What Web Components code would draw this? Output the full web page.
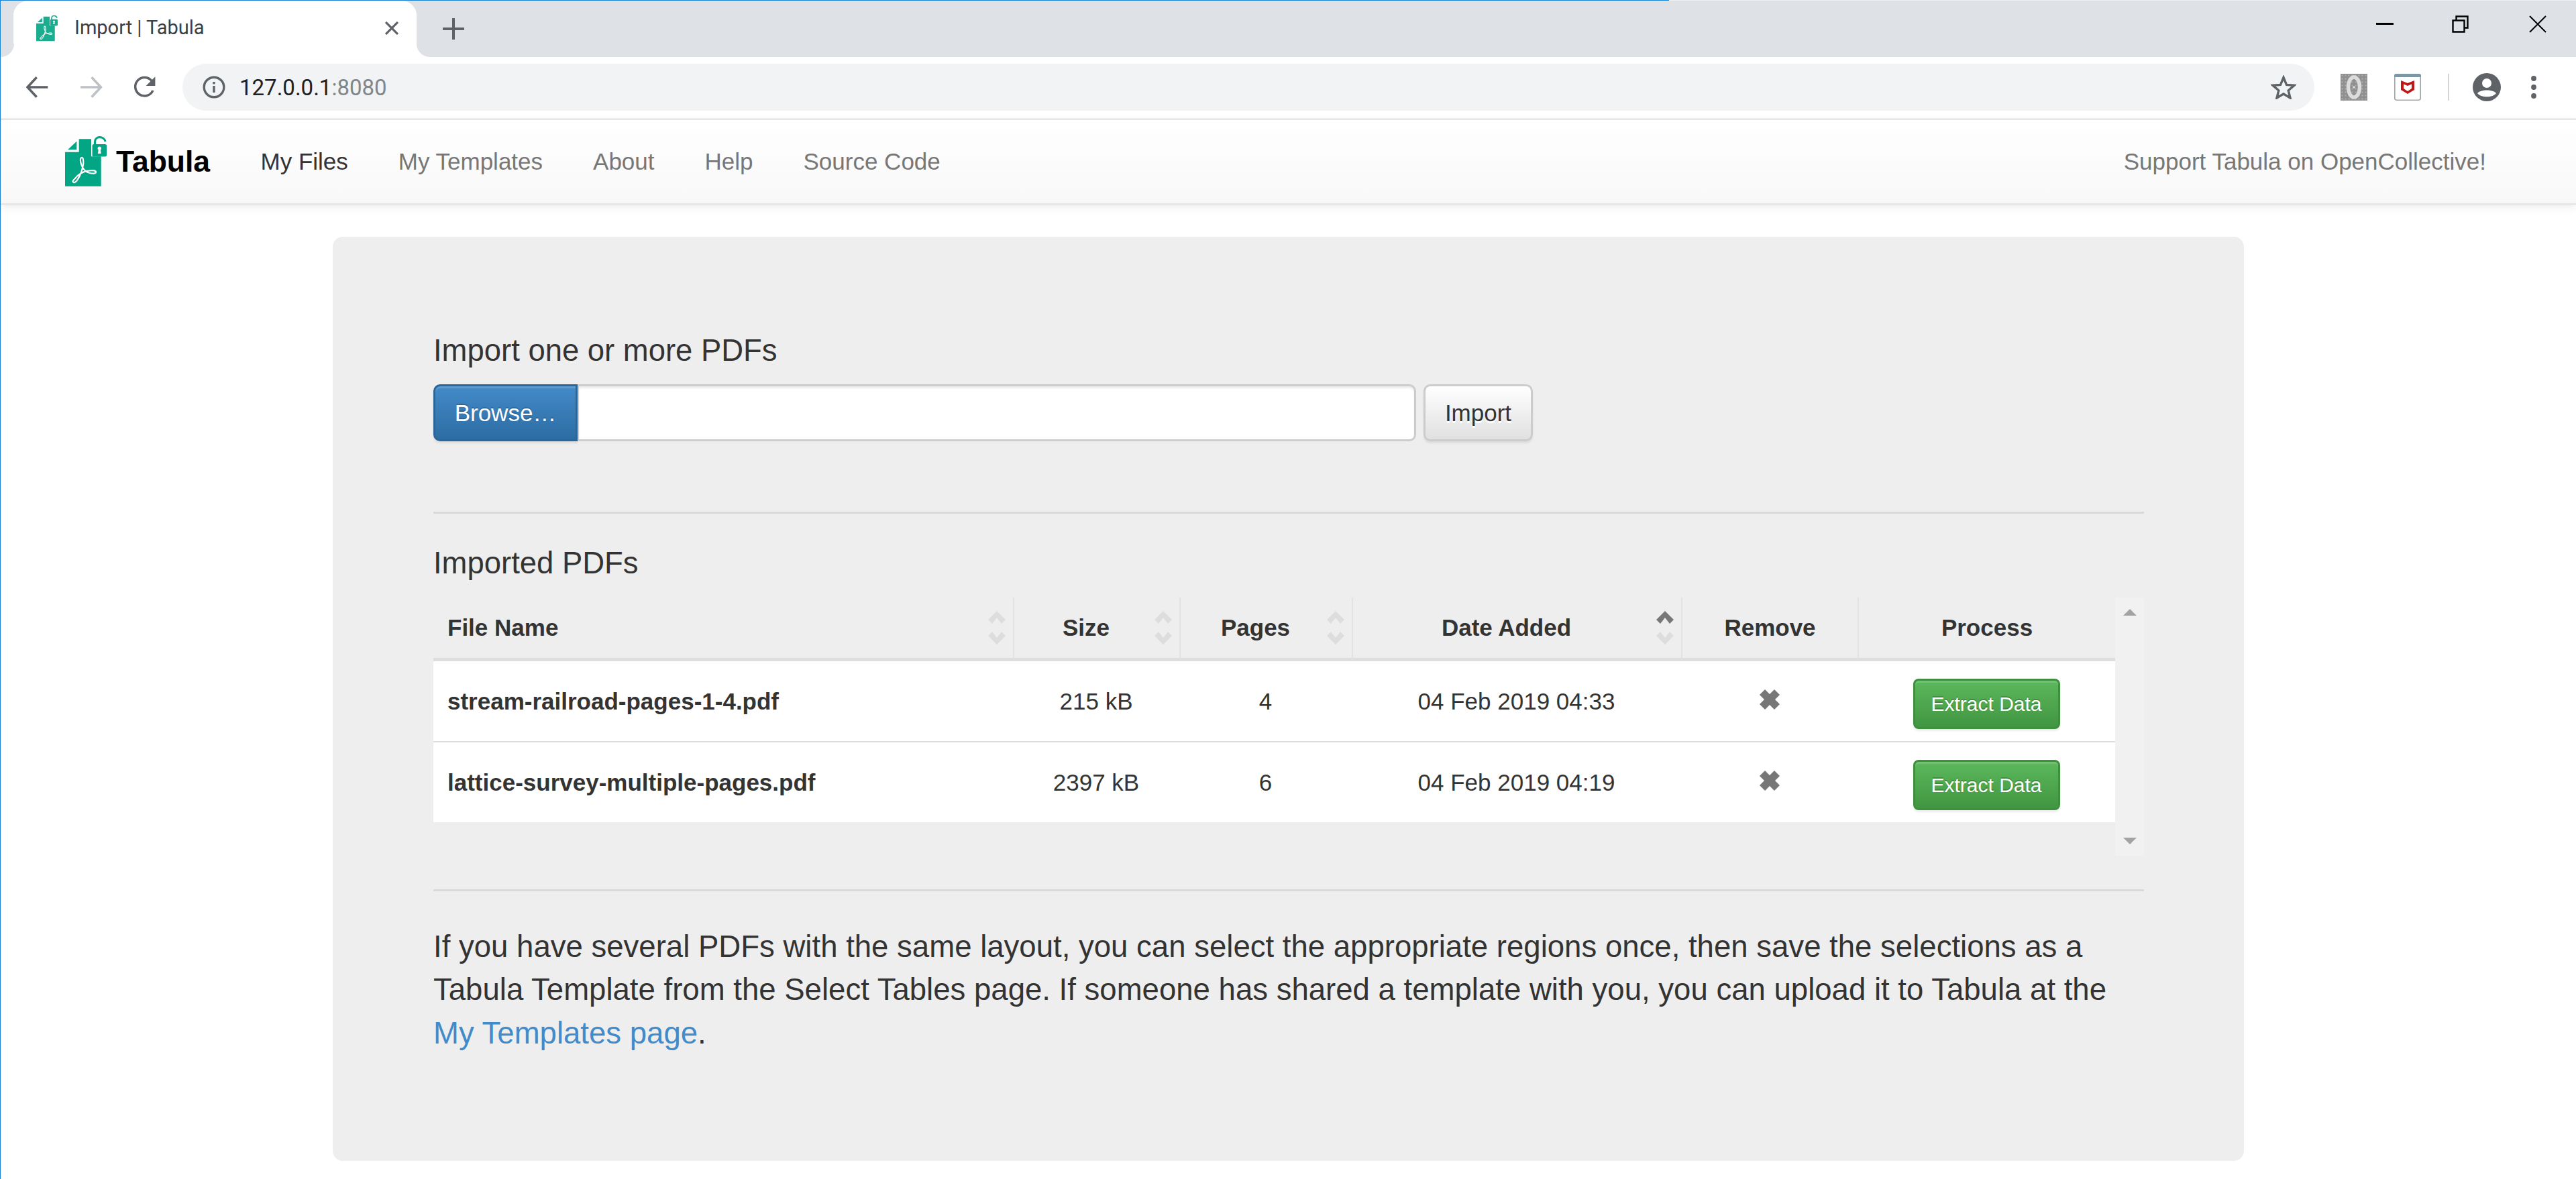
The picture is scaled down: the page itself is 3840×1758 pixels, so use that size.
<!DOCTYPE html>
<html>
<head>
<meta charset="utf-8">
<title>Import | Tabula</title>
<style>
  html, body { margin: 0; height: 100%; background: #fff; overflow: hidden; }
  body { font-family: "Liberation Sans", Arial, sans-serif; color: #333; font-size: 35px; }
</style>
</head>
<body>
<app-window>
  <browser-chrome></browser-chrome>
  <tabula-nav></tabula-nav>
  <import-panel></import-panel>
</app-window>

<script>
// Logo shapes, reused for the favicon and the navbar brand
const logoShapes = `
    <path d="M0 23.7H20.7V4.3H39V30.3H53.7V74.7H0Z" fill="#02a584"/>
    <path d="M17.3 7.7V20.3H4Z" fill="#02a584"/>
    <rect x="40.5" y="12" width="21.5" height="18.5" rx="2.5" fill="#02a584"/>
    <path d="M44.5 13V8.5C44.5 -0.5 58 -0.5 60.2 8" fill="none" stroke="#02a584" stroke-width="3.2"/>
    <path d="M51.3 15.5a2.7 2.7 0 0 1 1.5 5l1 5.5h-5l1-5.5a2.7 2.7 0 0 1 1.5-5Z" fill="#fff"/>
    <path d="M25 32C22 32 22.5 38 24.5 43C27 50 32 54 37 55C41 56 46 56 46 53.5C46 51 41 51 36 51.5C28 52 19 57 15 63C12 66 10 68 13 69C16 70 21 62 24 54C26 48 28 40 27 36C27 33 26 32 25 32Z" fill="none" stroke="#fff" stroke-width="2.2" stroke-linejoin="round"/>`;

function tabulaLogo(w, h) {
  return `<svg width="${w}" height="${h}" viewBox="0 0 62 75">${logoShapes}</svg>`;
}

class AppWindow extends HTMLElement {
  constructor() {
    super();
    this.attachShadow({ mode: 'open' }).innerHTML = `
      <style>
        :host { display: flex; flex-direction: column; height: 1758px; box-sizing: border-box; border-left: 1px solid #1883d7; position: relative; }
        .edge { position: absolute; left: -1px; top: 0; width: 2488px; height: 1px; background: #1883d7; z-index: 2; }
      </style>
      <div class="edge"></div>
      <slot></slot>`;
  }
}

class BrowserChrome extends HTMLElement {
  constructor() {
    super();
    this.attachShadow({ mode: 'open' }).innerHTML = `
      <style>
        :host { display: block; font-family: Roboto, "Open Sans", sans-serif; }
        .strip { height: 84px; padding-top: 1px; background: #dee1e6; box-shadow: inset 0 1px #eff1f3; display: flex; }
        .tab { margin-left: 19px; width: 601px; height: 84px; background: #fff; border-radius: 22px 22px 0 0; display: flex; align-items: center; box-sizing: border-box; padding-left: 34px; position: relative; }
        .tab::before, .tab::after { content: ""; position: absolute; bottom: 0; width: 20px; height: 20px; }
        .tab::before { left: -19px; background: radial-gradient(circle at 0 0, #dee1e6 19.5px, #fff 20.5px); }
        .tab::after { right: -20px; background: radial-gradient(circle at 100% 0, #dee1e6 19.5px, #fff 20.5px); }
        .tab svg.fav { margin-bottom: 2px; }
        .title { margin-left: 25px; font-size: 29px; color: #3c4043; margin-bottom: 4px; white-space: nowrap; flex: 1; }
        .plus { margin-left: 39px; margin-top: 26px; display: block; }
        .close { margin-right: 27px; margin-bottom: 2px; }
        .winbtns { margin-left: auto; display: flex; align-items: center; height: 70px; }
        .toolbar { height: 93px; box-sizing: border-box; background: #fff; border-bottom: 1px solid #b4b5b6; display: flex; align-items: center; }
        .navic { display: flex; align-items: center; padding-left: 38px; gap: 47px; width: 232px; box-sizing: border-box; margin-bottom: 2px; }
        .omni { margin-left: 39px; width: 3178px; height: 70px; margin-bottom: 2px; border-radius: 35px; background: #f1f3f4; display: flex; align-items: center; padding: 0 27px 0 30px; box-sizing: border-box; }
        .url { margin-left: 21px; font-size: 33px; color: #202124; flex: 1; }
        .url span { color: #80868b; }
        .ext { display: flex; align-items: center; margin-left: 39px; margin-bottom: 2px; }
      </style>
      <div class="strip">
        <div class="tab">
          <svg class="fav" width="32" height="40" viewBox="0 0 62 75" style="opacity:.9">${logoShapes}</svg>
          <span class="title">Import | Tabula</span>
          <svg class="close" width="20" height="20" viewBox="0 0 20 20"><path d="M1 1L19 19M19 1L1 19" stroke="#5f6368" stroke-width="3.2"/></svg>
        </div>
        <svg class="plus" width="32" height="32" viewBox="0 0 32 32"><path d="M16 1V31M1 16H31" stroke="#5f6368" stroke-width="4" stroke-linecap="round"/></svg>
        <div class="winbtns">
          <svg width="26" height="4" viewBox="0 0 26 4" style="margin-right:87px"><rect width="26" height="3" fill="#000"/></svg>
          <svg width="25" height="26" viewBox="0 0 25 26" style="margin-right:90px"><path d="M1.5 7.5H18.5V24.5H1.5ZM6.5 7V1.5H23.5V18.5H19" fill="none" stroke="#000" stroke-width="2.4"/></svg>
          <svg width="26" height="26" viewBox="0 0 26 26" style="margin-right:44px"><path d="M1 1L25 25M25 1L1 25" stroke="#000" stroke-width="2"/></svg>
        </div>
      </div>
      <div class="toolbar">
        <div class="navic">
          <svg width="34" height="32" viewBox="0 0 34 32"><path d="M33 16H3M16 1L2 16L16 31" fill="none" stroke="#5f6368" stroke-width="3.6"/></svg>
          <svg width="34" height="32" viewBox="0 0 34 32"><path d="M1 16H31M18 1L32 16L18 31" fill="none" stroke="#bdc1c6" stroke-width="3.6"/></svg>
          <svg width="34" height="34" viewBox="0 0 34 34"><path d="M28.5 22A14 14 0 1 1 27 8" fill="none" stroke="#5f6368" stroke-width="3.6"/><path d="M32 1V15H18Z" fill="#5f6368"/></svg>
        </div>
        <div class="omni">
          <svg width="34" height="34" viewBox="0 0 34 34"><circle cx="17" cy="17" r="14.8" fill="none" stroke="#5f6368" stroke-width="3.4"/><rect x="15.2" y="15" width="3.4" height="10" fill="#5f6368"/><rect x="15.2" y="9" width="3.4" height="3.4" fill="#5f6368"/></svg>
          <span class="url">127.0.0.1<span>:8080</span></span>
          <svg width="38" height="36" viewBox="0 0 38 36"><path d="M19 3.5L23.5 14.5L35 15.3L26.2 22.8L29 34L19 28L9 34L11.8 22.8L3 15.3L14.5 14.5Z" fill="none" stroke="#5f6368" stroke-width="3.4"/></svg>
        </div>
        <div class="ext">
          <svg width="40" height="40" viewBox="0 0 40 40">
            <defs><pattern id="dots" width="5" height="5" patternUnits="userSpaceOnUse"><rect width="5" height="5" fill="#8f8f8f"/><circle cx="2.5" cy="2.5" r="1.2" fill="#aaa"/></pattern></defs>
            <rect width="40" height="40" fill="url(#dots)"/><ellipse cx="20" cy="20" rx="8.5" ry="15" fill="none" stroke="#dcdcdc" stroke-width="5.5"/><circle cx="20" cy="20" r="1.8" fill="#ddd"/>
          </svg>
          <svg width="40" height="40" viewBox="0 0 40 40" style="margin-left:40px"><rect x=".8" y=".8" width="38.4" height="38.4" rx="3" fill="#fff" stroke="#9ea5a9" stroke-width="1.6"/><path d="M0 5V3A3 3 0 0 1 3 0H37A3 3 0 0 1 40 3V5Z" fill="#7c98a5"/><path d="M10 10L20 14L30 10V24L20 30L10 24Z" fill="#c01818"/><path d="M14 15.5L20 18L26 15.5V22L20 26L14 22Z" fill="#fff"/></svg>
          <div style="width:2px;height:40px;background:#d3d5d7;margin-left:40px"></div>
          <svg width="42" height="42" viewBox="0 0 42 42" style="margin-left:35px"><circle cx="21" cy="21" r="21" fill="#5f6368"/><circle cx="21" cy="15" r="7" fill="#fff"/><path d="M7 30C12 24 30 24 35 30C30 37 12 37 7 30Z" fill="#fff"/></svg>
          <svg width="10" height="36" viewBox="0 0 10 36" style="margin-left:44px"><circle cx="5" cy="5" r="3.9" fill="#5f6368"/><circle cx="5" cy="18" r="3.9" fill="#5f6368"/><circle cx="5" cy="31" r="3.9" fill="#5f6368"/></svg>
        </div>
      </div>`;
  }
}

class TabulaNav extends HTMLElement {
  constructor() {
    super();
    const links = ['My Files', 'My Templates', 'About', 'Help', 'Source Code'];
    this.attachShadow({ mode: 'open' }).innerHTML = `
      <style>
        :host { display: flex; align-items: center; height: 128px; box-sizing: border-box; padding: 0 134px 0 96px; background: linear-gradient(to bottom, #fff 0, #f8f8f8 100%); border-bottom: 3px solid #e7e7e7; box-shadow: 0 3px 12px rgba(0,0,0,.075); font-size: 35px; color: #777; position: relative; }
        .brand { display: flex; align-items: center; width: 291.5px; }
        .brand b { font-size: 44.5px; color: #000; margin-left: 14px; }
        a { margin-right: 75px; white-space: nowrap; }
        a.on { color: #333; }
        .right { margin-left: auto; margin-right: 0; }
      </style>
      <div class="brand">${tabulaLogo(62, 75)}<b>Tabula</b></div>
      ${links.map((l, i) => `<a class="${i === 0 ? 'on' : ''}">${l}</a>`).join('')}
      <a class="right">Support Tabula on OpenCollective!</a>`;
  }
}

class SortMark extends HTMLElement {
  constructor() {
    super();
    this.attachShadow({ mode: 'open' }).innerHTML = `
      <style>:host { display: block; position: absolute; right: 10px; top: 19px; line-height: 0; }</style>
      <svg width="28" height="52" viewBox="0 0 28 52">
        <path d="M14 1L27 14L21 20L14 11L7 20L1 14Z" fill="${this.getAttribute('dir') === 'up' ? '#777' : '#ddd'}"/>
        <path d="M14 51L27 38L21 32L14 41L7 32L1 38Z" fill="#ddd"/>
      </svg>`;
  }
}

class RemoveIcon extends HTMLElement {
  constructor() {
    super();
    this.attachShadow({ mode: 'open' }).innerHTML = `
      <style>:host { display: inline-block; line-height: 0; vertical-align: middle; margin-bottom: 9px; }</style>
      <svg width="30" height="30" viewBox="0 0 30 30"><path d="M8 0L15 7L22 0L30 8L23 15L30 22L22 30L15 23L8 30L0 22L7 15L0 8Z" fill="#777"/></svg>`;
  }
}

class BsButton extends HTMLElement {
  constructor() {
    super();
    this.attachShadow({ mode: 'open' }).innerHTML = `
      <style>
        :host { display: inline-flex; align-items: center; justify-content: center; box-sizing: border-box; border-radius: 10px; border: 3px solid; white-space: nowrap; }
        :host([kind="primary"]) { background: linear-gradient(to bottom, #428bca 0, #2d6ca2 100%); border-color: #2b669a; color: #fff; text-shadow: 0 -2px 0 rgba(0,0,0,.2); box-shadow: inset 0 3px 0 rgba(255,255,255,.15), 0 3px 3px rgba(0,0,0,.075); height: 85px; width: 215px; border-radius: 10px 0 0 10px; }
        :host([kind="success"]) { background: linear-gradient(to bottom, #5cb85c 0, #419641 100%); border-color: #3e8f3e; color: #fff; font-size: 30px; text-shadow: 0 -2px 0 rgba(0,0,0,.2); box-shadow: inset 0 3px 0 rgba(255,255,255,.15), 0 3px 3px rgba(0,0,0,.075); height: 75px; width: 219px; border-radius: 8px; vertical-align: middle; margin-top: 8px; }
        :host([kind="default"]) { background: linear-gradient(to bottom, #fff 0, #e0e0e0 100%); border-color: #ccc; color: #333; text-shadow: 0 3px 0 #fff; box-shadow: inset 0 3px 0 rgba(255,255,255,.15), 0 3px 3px rgba(0,0,0,.075); height: 85px; width: 163px; }
      </style>
      <slot></slot>`;
  }
}

class FileTable extends HTMLElement {
  constructor() {
    super();
    const files = [
      ['stream-railroad-pages-1-4.pdf', '215 kB', '4', '04 Feb 2019 04:33'],
      ['lattice-survey-multiple-pages.pdf', '2397 kB', '6', '04 Feb 2019 04:19']
    ];
    const row = f => `<tr>
      <td class="name">${f[0]}</td><td>${f[1]}</td><td>${f[2]}</td><td>${f[3]}</td>
      <td><remove-icon></remove-icon></td>
      <td><bs-button kind="success">Extract Data</bs-button></td></tr>`;
    this.attachShadow({ mode: 'open' }).innerHTML = `
      <style>
        :host { display: flex; height: 385px; }
        .wrap { width: 2507px; }
        table { width: 2507px; border-collapse: separate; border-spacing: 0; table-layout: fixed; font-size: 35px; }
        th { height: 90px; padding: 0; font-weight: bold; position: relative; border-left: 2px solid #e2e2e2; border-bottom: 5px solid #ddd; }
        th:first-child { border-left: 0; text-align: left; padding-left: 21px; }
        th.sort { padding-right: 32px; }
        td { text-align: center; background: #fff; height: 119px; padding: 0; border-top: 2px solid #ddd; }
        tr:first-child td { border-top: 0; }
        td.name { text-align: left; padding-left: 21px; font-weight: bold; }
        .bar { width: 43px; height: 385px; background: #f1f1f1; display: flex; flex-direction: column; align-items: center; justify-content: space-between; padding: 17px 0; box-sizing: border-box; }
      </style>
      <div class="wrap">
        <table>
          <colgroup><col style="width:864px"><col style="width:248px"><col style="width:257px"><col style="width:491px"><col style="width:263px"><col style="width:384px"></colgroup>
          <thead><tr>
            <th class="sort">File Name<sort-mark></sort-mark></th>
            <th class="sort">Size<sort-mark></sort-mark></th>
            <th class="sort">Pages<sort-mark></sort-mark></th>
            <th class="sort">Date Added<sort-mark dir="up"></sort-mark></th>
            <th>Remove</th>
            <th>Process</th>
          </tr></thead>
          <tbody>${files.map(row).join('')}</tbody>
        </table>
      </div>
      <div class="bar">
        <svg width="20" height="10" viewBox="0 0 20 10" style="display:block"><path d="M10 0L20 10H0Z" fill="#a3a3a3"/></svg>
        <svg width="20" height="10" viewBox="0 0 20 10" style="display:block"><path d="M10 10L20 0H0Z" fill="#a3a3a3"/></svg>
      </div>`;
  }
}

class ImportPanel extends HTMLElement {
  constructor() {
    super();
    this.attachShadow({ mode: 'open' }).innerHTML = `
      <style>
        :host { display: block; width: 2849px; height: 1378px; box-sizing: border-box; margin: 47px 0 0 495px; padding: 145px 149px 0 150px; background: #eee; border-radius: 15px; }
        h4 { font-size: 45.45px; font-weight: normal; margin: 0; line-height: 50px; color: #333; }
        .upload { display: flex; margin-top: 25px; }
        .field { width: 1250px; height: 85px; box-sizing: border-box; background: #fff; border: 3px solid #ccc; border-left-width: 2px; border-radius: 0 10px 10px 0; box-shadow: inset 0 3px 3px rgba(0,0,0,.075); }
        bs-button[kind="default"] { margin-left: 11px; }
        hr { border: 0; height: 3px; background: #d9d9d9; margin: 0; }
        .h1 { margin-top: 105px; }
        .imported { margin-top: 49px; }
        file-table { margin-top: 26px; }
        .h2 { margin-top: 50px; }
        p { font-size: 45.55px; line-height: 64.3px; margin: 51px 0 0; color: #333; }
        a { color: #428bca; }
      </style>
      <h4>Import one or more PDFs</h4>
      <div class="upload">
        <bs-button kind="primary">Browse…</bs-button>
        <div class="field"></div>
        <bs-button kind="default">Import</bs-button>
      </div>
      <hr class="h1">
      <h4 class="imported">Imported PDFs</h4>
      <file-table></file-table>
      <hr class="h2">
      <p>If you have several PDFs with the same layout, you can select the appropriate regions once, then save the selections as a Tabula Template from the Select Tables page. If someone has shared a template with you, you can upload it to Tabula at the <a>My Templates page</a>.</p>`;
  }
}

// children first so nested elements read their attributes at upgrade
customElements.define('sort-mark', SortMark);
customElements.define('remove-icon', RemoveIcon);
customElements.define('bs-button', BsButton);
customElements.define('file-table', FileTable);
customElements.define('import-panel', ImportPanel);
customElements.define('tabula-nav', TabulaNav);
customElements.define('browser-chrome', BrowserChrome);
customElements.define('app-window', AppWindow);
</script>
</body>
</html>
